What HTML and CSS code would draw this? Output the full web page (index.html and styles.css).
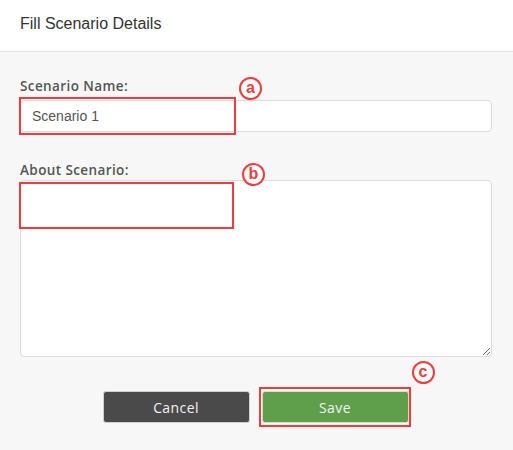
FILE: index.html
```html
<!DOCTYPE html>
<html>
<head>
<meta charset="utf-8">
<link rel="stylesheet" href="styles.css">
</head>
<body>
<div class="header"><h1 class="title">Fill Scenario Details</h1></div>
<div class="content">
  <label class="label label-name">Scenario Name:</label>
  <div class="field">
    <input class="input" type="text" value="Scenario 1">
    <span class="mark mark-a"></span>
    <span class="badge badge-a">a</span>
  </div>
  <label class="label label-about">About Scenario:</label>
  <div class="field">
    <textarea class="textarea"></textarea>
    <span class="mark mark-b"></span>
    <span class="badge badge-b">b</span>
  </div>
  <div class="actions">
    <button class="btn btn-cancel">Cancel</button>
    <div class="save-wrap">
      <button class="btn btn-save">Save</button>
      <span class="mark mark-c"></span>
      <span class="badge badge-c">c</span>
    </div>
  </div>
</div>
</body>
</html>
```
FILE: styles.css
```css
* { box-sizing: border-box; }
html, body { margin: 0; padding: 0; }
body {
  background: #f7f7f7;
  font-family: "Liberation Sans", Arial, sans-serif;
  min-height: 450px;
}
.header {
  height: 52px;
  background: #fff;
  border-bottom: 1px solid #e6e6e6;
  padding: 14px 20px 0;
}
.title {
  margin: 0;
  font-size: 16px;
  line-height: 20px;
  font-weight: normal;
  color: #333;
}
.content {
  padding: 26px 21px 30px 20px;
}
.label {
  display: block;
  font-family: "Open Sans", sans-serif;
  font-size: 13.5px;
  font-weight: 600;
  letter-spacing: 0.4px;
  line-height: 16px;
  color: #555;
}
.label-name { margin-bottom: 6px; }
.label-about { margin-top: 30px; margin-bottom: 2px; }
.field { position: relative; }
.input {
  display: block;
  width: 100%;
  height: 32px;
  border: 1px solid #dcdcdc;
  border-radius: 4px;
  background: #fff;
  padding: 0 11px;
  font-family: "Liberation Sans", Arial, sans-serif;
  font-size: 14px;
  color: #555;
  outline: none;
}
.textarea {
  display: block;
  width: 100%;
  height: 177px;
  border: 1px solid #dcdcdc;
  border-radius: 4px;
  background: #fff;
  margin: 0;
  font-family: "Liberation Sans", Arial, sans-serif;
  font-size: 14px;
  outline: none;
  resize: vertical;
}
.actions {
  display: flex;
  justify-content: center;
  gap: 12px;
  margin-top: 34px;
  padding-right: 1px;
}
.save-wrap { position: relative; width: 147px; height: 32px; }
.btn {
  display: block;
  width: 147px;
  height: 32px;
  margin: 0;
  border-radius: 3px;
  font-family: "Open Sans", sans-serif;
  font-size: 14px;
  letter-spacing: 0.4px;
  color: #f2f2f2;
  cursor: pointer;
}
.btn-cancel {
  background: #4a4a4a;
  border: 1px solid #d0d0d0;
}
.btn-save {
  background: #5f9f4c;
  border: 1px solid #cfe0c8;
}
.mark {
  position: absolute;
  border: 2px solid #f03c3c;
  pointer-events: none;
}
.mark-a { left: -1px; top: -3px; width: 217px; height: 38px; }
.mark-b { left: -1px; top: 2px; width: 215px; height: 47px; }
.mark-c { left: -3px; top: -4px; width: 152px; height: 40px; }
.badge {
  position: absolute;
  width: 23px;
  height: 23px;
  border: 2px solid #f03c3c;
  border-radius: 50%;
  color: #f03c3c;
  background: #fff;
  font-family: "Liberation Sans", Arial, sans-serif;
  font-weight: bold;
  font-size: 16px;
  line-height: 18px;
  text-align: center;
}
.badge-a { left: 219px; top: -23px; }
.badge-b { left: 222px; top: -17px; }
.badge-c { left: 150px; top: -30px; }
```
